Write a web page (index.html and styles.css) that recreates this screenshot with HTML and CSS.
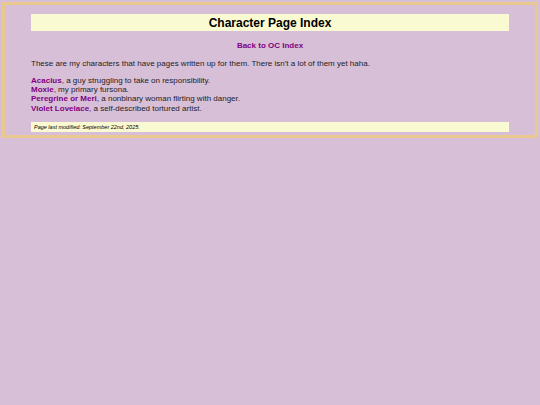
FILE: index.html
```html
<!DOCTYPE html>
<html>
<head>
<meta charset="utf-8">
<title>Character Page Index</title>
<link rel="stylesheet" href="styles.css">
</head>
<body>
<div class="page">
  <h1 class="title">Character Page Index</h1>
  <p class="back"><a href="#">Back to OC Index</a></p>
  <p class="intro">These are my characters that have pages written up for them. There isn't a lot of them yet haha.</p>
  <p class="list">
    <a href="#">Acacius</a>, a guy struggling to take on responsibility.<br>
    <a href="#">Moxie</a>, my primary fursona.<br>
    <a href="#">Peregrine or Meri</a>, a nonbinary woman flirting with danger.<br>
    <a href="#">Violet Lovelace</a>, a self-described tortured artist.
  </p>
  <div class="footer">Page last modified: September 22nd, 2025.</div>
</div>
</body>
</html>
```
FILE: styles.css
```css
html, body {
  margin: 0;
  padding: 0;
}
body {
  background: #d8bfd8;
  font-family: "Liberation Sans", Arial, sans-serif;
  font-size: 8px;
  color: #1c1c1c;
  padding: 2px;
}
.page {
  border: 3px solid #e9c98f;
  padding: 9px 26px 3px;
}
.title {
  margin: 0;
  background: #fafad2;
  text-align: center;
  font-size: 12px;
  font-weight: bold;
  line-height: 14px;
  padding: 2px 0 1px;
  color: #000;
}
a {
  color: #800080;
  font-weight: bold;
  text-decoration: none;
}
.back {
  margin: 10px 0 0;
  text-align: center;
}
.intro {
  margin: 9px 0 0;
}
.list {
  margin: 8px 0 0;
  line-height: 9.2px;
}
.footer {
  margin-top: 9px;
  background: #fafad2;
  font-size: 5.5px;
  font-style: italic;
  line-height: 7px;
  padding: 2px 3px 1px;
  color: #000;
}
```
